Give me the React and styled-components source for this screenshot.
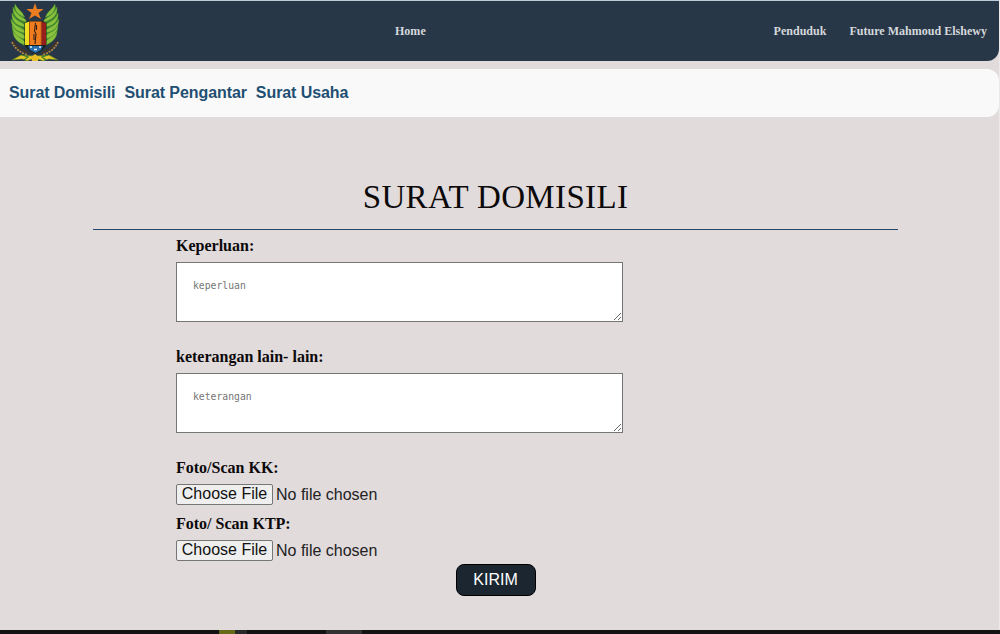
import React from "react";
import styled, { createGlobalStyle } from "styled-components";

const GlobalStyle = createGlobalStyle`
  *, *::before, *::after { box-sizing: border-box; }
  html, body { margin: 0; height: 634px; overflow: hidden; }
  body {
    background: #e1dbdc;
    color: #0c090a;
    font-family: "Liberation Serif", "Times New Roman", serif;
  }
`;

const Page = styled.div`
  display: flex;
  flex-direction: column;
  height: 634px;
`;

const Body = styled.div`
  flex: 1;
  border-right: 1px solid #ece9ea;
`;

const Header = styled.header`
  display: grid;
  grid-template-columns: 395px 1fr auto;
  align-items: center;
  height: 61px;
  padding-right: 12px;
  border-top: 1px solid #bccbd6;
  background: #283747;
  border-bottom-right-radius: 12px;
`;

const Crest = styled.svg`
  display: block;
  width: 50px;
  height: 58px;
  margin: 2px 0 0 10px;
`;

const NavLink = styled.a`
  font-size: 12px;
  line-height: 14px;
  font-weight: bold;
  letter-spacing: 0.02px;
  color: #d5d8dc;
`;

const Account = styled.div`
  display: flex;
  gap: 23px;
`;

const Tabs = styled.nav`
  display: flex;
  align-items: center;
  gap: 9px;
  height: 48px;
  margin-top: 8px;
  padding: 0 9px;
  background: #f9f9f9;
  border-radius: 0 12px 12px 0;
`;

const Tab = styled.a`
  font: bold 16px/18px "Liberation Sans", Arial, sans-serif;
  letter-spacing: -0.08px;
  color: #1f4f72;
`;

const Main = styled.main`
  width: 805px;
  margin: 62px 0 0 93px;
`;

const Title = styled.h1`
  margin: 0;
  height: 51px;
  border-bottom: 1px solid #24476b;
  text-align: center;
  font-size: 33px;
  line-height: 37px;
  font-weight: normal;
  letter-spacing: 0.35px;
`;

const Form = styled.form`
  display: flex;
  flex-direction: column;
  align-items: flex-start;
  padding: 7px 0 0 83px;
`;

const Label = styled.label`
  font-size: 16px;
  line-height: 18px;
  font-weight: bold;
`;

const TextArea = styled.textarea`
  display: block;
  width: 447px;
  height: 60px;
  margin: 7px 0 26px;
  padding: 16px;
  border: 1px solid #767676;
  border-radius: 0;
  background: #fff;
  font: 9.75px/13px "DejaVu Sans Mono", monospace;
  &::placeholder { color: #757575; }
`;

const FileInput = styled.input.attrs({ type: "file" })`
  display: block;
  height: 21px;
  margin: 7px 0 10px;
  font: 16px/21px "Liberation Sans", Arial, sans-serif;
  color: #222;
  &::file-selector-button {
    width: 97px;
    height: 21px;
    margin: 0 3px 0 0;
    padding: 0 0 2px;
    vertical-align: 1px;
    border: 1px solid #767676;
    border-radius: 2px;
    background: #efefef;
    color: #111;
    font: 16px/17px "Liberation Sans", Arial, sans-serif;
  }
`;

const Submit = styled.button`
  width: 80px;
  height: 32px;
  margin: -7px 0 0 280px;
  padding: 0 1px 1px 0;
  border: 1px solid #000;
  border-radius: 8px;
  background: #1b2631;
  color: #fff;
  font: 16px/18px "Liberation Sans", Arial, sans-serif;
`;

const Taskbar = styled.footer`
  display: flex;
  height: 4px;
  background: #101312;
`;

const TaskItem = styled.span`
  width: ${(p) => p.$width}px;
  margin-left: ${(p) => p.$gap}px;
  background: ${(p) => p.$color};
`;

const wingFeathers = [
  "M15 14 C9 13 4 8 5 1 C8 7 12 8 14 13Z",
  "M16 19 C7 17 2 11 3 4 C6 12 11 13 16 17Z",
  "M15 24 C5 23 1 16 2 10 C5 18 10 18 15 22Z",
  "M15 30 C5 29 1 22 1 16 C5 24 10 23 15 28Z",
  "M15 36 C6 35 2 28 2 22 C6 30 10 28 15 33Z",
  "M15 42 C8 40 3 35 3 28 C7 35 11 34 15 39Z",
];

const Wing = ({ flip }) => (
  <g transform={flip ? "translate(50 0) scale(-1 1)" : undefined}>
    <path d="M5 2 C1 12 1 26 4 34 L14 43 L16 20 C14 13 11 8 5 2Z" fill="#3b8030" />
    {wingFeathers.map((d) => (
      <path key={d} d={d} fill="#8ac13c" stroke="#4c8f32" strokeWidth=".4" />
    ))}
    <path d="M2 39 C5 46 11 50 18 52" fill="none" stroke="#b98a43" strokeWidth="1.6" strokeDasharray="2 1" />
    <path d="M3 38 C7 45 12 47 18 50" fill="none" stroke="#513318" strokeWidth="1.3" />
  </g>
);

const Emblem = () => (
  <Crest viewBox="0 0 50 58">
    <Wing />
    <Wing flip />
    <path d="M14.5 20 L19 18 H32 L36.5 20 V42 Q33 48 25.5 51 Q18 48 14.5 42Z" fill="#17221d" />
    <path d="M15 20 L19.5 18.5 V42 H15Z" fill="#f0df20" />
    <path d="M31 18.5 L36 20 V42 H31Z" fill="#961f1b" />
    <path d="M19.5 18.5 H31.5 V42 H19.5Z" fill="#ef7d1d" />
    <path d="M19.5 18.5 V42 M31.3 18.5 V42" stroke="#8a3518" strokeWidth=".7" />
    <path d="M25.5 20 L24.5 28 L26 31 L25 41 M24 31 V37 M26.5 22 V27" fill="none" stroke="#351e17" strokeWidth="1.1" />
    <path d="M18 43 H33 L31 47 L25.5 50 L20 47Z" fill="#286dad" />
    <path d="M20 44 H22 M24 46.5 H27 M29 44 H31" stroke="#e5f4fa" strokeWidth="1.5" />
    <path d="M2 57 L11 52 L25 53 L39 52 L48 57 L39 56 L33 58 L25 55 L17 58 L12 56Z" fill="#e2c72a" stroke="#447322" strokeWidth=".6" />
    <path d="M12 52 L18 54 L14 57 M38 52 L32 54 L36 57" fill="none" stroke="#397d2b" strokeWidth="1.3" />
    <path d="M21 54 L25 51 L29 54 L28 58 H22Z" fill="#e8bd25" />
    <path d="M25 0 L27 6 H33.5 L28.5 10 L31 16 L25 12.5 L19 16 L21.5 10 L16.5 6 H23Z" fill="#ec7c20" />
  </Crest>
);

export default function App() {
  return (
    <Page>
      <GlobalStyle />
      <Body>
        <Header>
          <Emblem />
          <NavLink>Home</NavLink>
          <Account>
            <NavLink>Penduduk</NavLink>
            <NavLink>Future Mahmoud Elshewy</NavLink>
          </Account>
        </Header>
        <Tabs>
          <Tab>Surat Domisili</Tab>
          <Tab>Surat Pengantar</Tab>
          <Tab>Surat Usaha</Tab>
        </Tabs>
        <Main>
          <Title>SURAT DOMISILI</Title>
          <Form>
            <Label htmlFor="keperluan">Keperluan:</Label>
            <TextArea id="keperluan" placeholder="keperluan" />
            <Label htmlFor="keterangan">keterangan lain- lain:</Label>
            <TextArea id="keterangan" placeholder="keterangan" />
            <Label htmlFor="kk">Foto/Scan KK:</Label>
            <FileInput id="kk" />
            <Label htmlFor="ktp">Foto/ Scan KTP:</Label>
            <FileInput id="ktp" />
            <Submit type="button">KIRIM</Submit>
          </Form>
        </Main>
      </Body>
      <Taskbar>
        <TaskItem $gap={219} $width={16} $color="#66691a" />
        <TaskItem $gap={0} $width={12} $color="#272a28" />
        <TaskItem $gap={79} $width={36} $color="#303332" />
      </Taskbar>
    </Page>
  );
}
